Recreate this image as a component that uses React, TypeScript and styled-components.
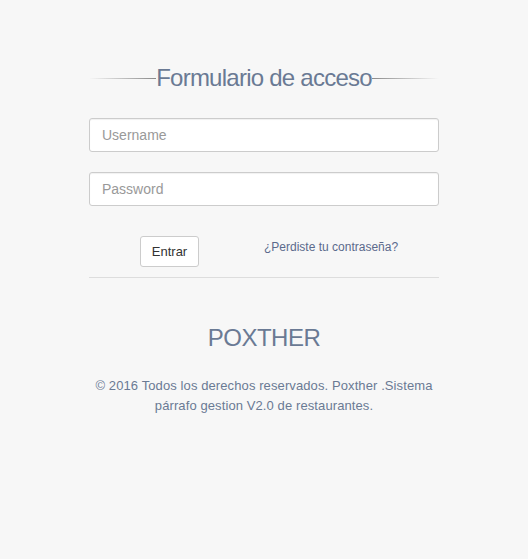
import React from "react";
import styled, { createGlobalStyle } from "styled-components";

const Global = createGlobalStyle`
  html, body { margin: 0; padding: 0; background: #f7f7f7; }
  body { font-family: "Liberation Sans", Arial, sans-serif; }
  * { box-sizing: border-box; }
`;

const Page = styled.div`
  width: 528px;
  min-height: 559px;
  background: #f7f7f7;
  display: flex;
  justify-content: center;
  padding-top: 64px;
`;

const Wrapper = styled.div`
  width: 350px;
  display: flex;
  flex-direction: column;
`;

const TitleRow = styled.div`
  display: flex;
  align-items: center;
  height: 28px;
`;

const Line = styled.div<{ $dir: "left" | "right" }>`
  flex: 1;
  height: 1px;
  background: linear-gradient(
    ${(p) => (p.$dir === "left" ? "to right" : "to left")},
    rgba(120, 120, 120, 0),
    #8a8a8a
  );
`;

const Title = styled.h1`
  margin: 0;
  font-size: 24px;
  font-weight: normal;
  color: #6a7a94;
  letter-spacing: -0.75px;
  line-height: 28px;
`;

const Input = styled.input`
  width: 100%;
  height: 34px;
  border: 1px solid #cccccc;
  border-radius: 3px;
  background: #fff;
  padding: 0 12px;
  font-family: "Liberation Sans", Arial, sans-serif;
  font-size: 14px;
  color: #555;
  box-shadow: inset 0 1px 1px rgba(0, 0, 0, 0.06);
  outline: none;
  &::placeholder { color: #999; }
`;

const Fields = styled.div`
  display: flex;
  flex-direction: column;
  gap: 20px;
  margin-top: 26px;
`;

const Actions = styled.div`
  display: grid;
  grid-template-columns: 175px 175px;
  margin-top: 30px;
  padding-bottom: 10px;
  border-bottom: 1px solid #dddddd;
`;

const Button = styled.button`
  justify-self: start;
  margin-left: 51px;
  width: 59px;
  height: 31px;
  background: #fff;
  border: 1px solid #cccccc;
  border-radius: 3px;
  font-family: "Liberation Sans", Arial, sans-serif;
  font-size: 13px;
  color: #333;
  padding: 0;
`;

const Link = styled.a`
  align-self: start;
  margin-top: 4px;
  font-size: 12px;
  color: #5b6a8c;
  text-decoration: none;
  line-height: 14px;
`;

const Brand = styled.div`
  margin-top: 46px;
  text-align: center;
  font-size: 24px;
  color: #6a7a94;
  letter-spacing: -0.5px;
  line-height: 28px;
`;

const Footer = styled.p`
  margin: 24px 0 0;
  text-align: center;
  font-size: 13px;
  letter-spacing: 0.1px;
  line-height: 20px;
  color: #6a7a94;
`;

export default function App() {
  return (
    <>
      <Global />
      <Page>
        <Wrapper>
          <TitleRow>
            <Line $dir="left" />
            <Title>Formulario de acceso</Title>
            <Line $dir="right" />
          </TitleRow>
          <Fields>
            <Input placeholder="Username" />
            <Input placeholder="Password" type="password" />
          </Fields>
          <Actions>
            <Button>Entrar</Button>
            <Link href="#">¿Perdiste tu contraseña?</Link>
          </Actions>
          <Brand>POXTHER</Brand>
          <Footer>
            © 2016 Todos los derechos reservados. Poxther .Sistema
            <br />
            párrafo gestion V2.0 de restaurantes.
          </Footer>
        </Wrapper>
      </Page>
    </>
  );
}
